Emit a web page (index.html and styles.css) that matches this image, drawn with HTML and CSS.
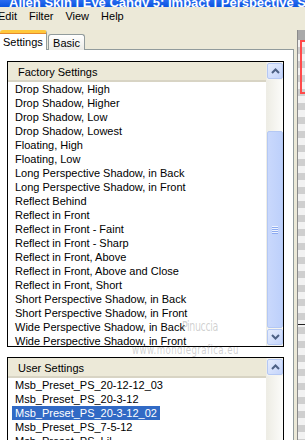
FILE: index.html
```html
<!DOCTYPE html>
<html>
<head>
<meta charset="utf-8">
<link rel="stylesheet" href="styles.css">
</head>
<body>
<div class="titlebar">
  <span class="title-icon"></span>
  <span class="title-text">Alien Skin | Eye Candy 5: Impact | Perspective Shadow</span>
</div>
<div class="menubar">
  <span class="menu first">Edit</span>
  <span class="menu">Filter</span>
  <span class="menu">View</span>
  <span class="menu">Help</span>
</div>
<div class="main">
  <div class="left">
    <div class="tabs">
      <div class="tab active">Settings</div>
      <div class="tab">Basic</div>
    </div>
    <div class="panel">
      <div class="listbox factory">
        <div class="listcol">
          <div class="lhead">Factory Settings</div>
          <div class="items">
            <div class="item"><span>Drop Shadow, High</span></div>
            <div class="item"><span>Drop Shadow, Higher</span></div>
            <div class="item"><span>Drop Shadow, Low</span></div>
            <div class="item"><span>Drop Shadow, Lowest</span></div>
            <div class="item"><span>Floating, High</span></div>
            <div class="item"><span>Floating, Low</span></div>
            <div class="item"><span>Long Perspective Shadow, in Back</span></div>
            <div class="item"><span>Long Perspective Shadow, in Front</span></div>
            <div class="item"><span>Reflect Behind</span></div>
            <div class="item"><span>Reflect in Front</span></div>
            <div class="item"><span>Reflect in Front - Faint</span></div>
            <div class="item"><span>Reflect in Front - Sharp</span></div>
            <div class="item"><span>Reflect in Front, Above</span></div>
            <div class="item"><span>Reflect in Front, Above and Close</span></div>
            <div class="item"><span>Reflect in Front, Short</span></div>
            <div class="item"><span>Short Perspective Shadow, in Back</span></div>
            <div class="item"><span>Short Perspective Shadow, in Front</span></div>
            <div class="item"><span>Wide Perspective Shadow, in Back</span></div>
            <div class="item"><span>Wide Perspective Shadow, in Front</span></div>
          </div>
        </div>
        <div class="scrollbar">
          <div class="sbtn"><svg width="9" height="6" viewBox="0 0 9 6"><path d="M1 5 L4.5 1.5 L8 5" fill="none" stroke="#4d6185" stroke-width="2"/></svg></div>
          <div class="track">
            <div class="thumb"><div class="grip"><i></i><i></i><i></i><i></i></div></div>
          </div>
          <div class="sbtn"><svg width="9" height="6" viewBox="0 0 9 6"><path d="M1 1 L4.5 4.5 L8 1" fill="none" stroke="#4d6185" stroke-width="2"/></svg></div>
        </div>
      </div>
      <div class="listbox user">
        <div class="listcol">
          <div class="lhead">User Settings</div>
          <div class="items">
            <div class="item"><span>Msb_Preset_PS_20-12-12_03</span></div>
            <div class="item"><span>Msb_Preset_PS_20-3-12</span></div>
            <div class="item sel"><span>Msb_Preset_PS_20-3-12_02</span></div>
            <div class="item"><span>Msb_Preset_PS_7-5-12</span></div>
            <div class="item"><span>Msb_Preset_PS_Lil</span></div>
          </div>
        </div>
        <div class="scrollbar">
          <div class="sbtn"><svg width="9" height="6" viewBox="0 0 9 6"><path d="M1 5 L4.5 1.5 L8 5" fill="none" stroke="#4d6185" stroke-width="2"/></svg></div>
          <div class="track"></div>
        </div>
      </div>
    </div>
  </div>
  <div class="right">
    <div class="preview">
      <div class="pv-top"></div>
      <div class="pv-canvas">
        <div class="redbox"></div>
        <div class="pv-line"></div>
      </div>
    </div>
  </div>
</div>
<div class="wm wm1">Pinuccia</div>
<div class="wm wm2">www.mondiegrafica.eu</div>
</body>
</html>
```
FILE: styles.css
```css
html, body {
  margin: 0;
  padding: 0;
}
body {
  width: 305px;
  height: 440px;
  overflow: hidden;
  background: #ece9d8;
  font-family: "Liberation Sans", Arial, sans-serif;
  font-size: 11px;
  color: #000;
  position: relative;
}
.titlebar {
  height: 7px;
  overflow: hidden;
  background: linear-gradient(#2a6cf0, #0a54e0);
  display: flex;
  align-items: flex-end;
  position: relative;
}
.title-icon {
  width: 6px;
  height: 5px;
  background: #1a2a4a;
  margin-left: 0;
  align-self: flex-start;
}
.title-text {
  color: #fff;
  font-weight: bold;
  font-size: 13px;
  line-height: 13px;
  white-space: nowrap;
  margin-left: 9px;
  margin-bottom: -2px;
}
.menubar {
  height: 17px;
  display: flex;
  align-items: center;
  padding-top: 1px;
  box-sizing: border-box;
}
.menu {
  padding: 0 6px;
}
.menu.first {
  margin-left: -8px;
}
.main {
  display: flex;
  height: 416px;
}
.left {
  width: 294px;
  display: flex;
  flex-direction: column;
  padding-top: 7px;
  box-sizing: border-box;
}
.tabs {
  display: flex;
  align-items: flex-end;
  height: 19px;
  position: relative;
  z-index: 1;
  margin-bottom: -1px;
}
.tab {
  height: 16px;
  width: 37px;
  box-sizing: border-box;
  border: 1px solid #919b9c;
  border-bottom: none;
  border-radius: 3px 3px 0 0;
  background: linear-gradient(#ffffff, #ecebe6);
  display: flex;
  align-items: center;
  justify-content: center;
  padding-top: 1px;
  margin-left: 1px;
}
.tab.active {
  height: 20px;
  width: 47px;
  margin-left: 0;
  background: #fff;
  border-top: 3px solid #ffc83c;
  border-left: none;
  border-radius: 3px 3px 0 0;
  justify-content: flex-start;
  padding-left: 3px;
  padding-top: 0;
  box-shadow: inset 0 1px 0 #e68b2c;
}
.panel {
  flex: 1;
  background: #fff;
  border-top: 1px solid #919b9c;
  border-right: 1px solid #919b9c;
  padding: 11px 9px 0 7px;
  display: flex;
  flex-direction: column;
  gap: 10px;
  overflow: hidden;
}
.listbox {
  border: 1px solid #000;
  display: flex;
  overflow: hidden;
  flex-shrink: 0;
}
.listbox.factory {
  height: 284px;
}
.listbox.user {
  height: 120px;
}
.listcol {
  flex: 1;
  display: flex;
  flex-direction: column;
  min-width: 0;
}
.lhead {
  height: 20px;
  box-sizing: border-box;
  background: #ece9d8;
  border-bottom: 2px solid #d8d4c4;
  padding-left: 10px;
  display: flex;
  align-items: center;
  padding-top: 1px;
  flex-shrink: 0;
}
.items {
  padding-left: 4px;
}
.item {
  height: 14px;
  line-height: 14px;
  white-space: nowrap;
}
.item span {
  display: inline-block;
  padding: 0 3px;
}
.item.sel span {
  background: #316ac5;
  color: #fff;
}
.scrollbar {
  width: 16px;
  display: flex;
  flex-direction: column;
  background: #f5f4ef;
  border-left: 1px solid #eeede6;
}
.sbtn {
  height: 16px;
  box-sizing: border-box;
  margin: 1px 0;
  border: 1px solid #b4c8f4;
  border-radius: 2px;
  background: linear-gradient(135deg, #e6edfd, #c4d4fb);
  display: flex;
  align-items: center;
  justify-content: center;
  flex-shrink: 0;
}
.track {
  flex: 1;
  display: flex;
  flex-direction: column;
  justify-content: flex-end;
  background: linear-gradient(90deg, #eeede5, #fcfcfa);
}
.thumb {
  height: 197px;
  box-sizing: border-box;
  border: 1px solid #b4c8f4;
  border-radius: 2px;
  background: linear-gradient(90deg, #c9d8fc, #bdd0fb);
  display: flex;
  align-items: center;
  justify-content: center;
}
.grip {
  display: flex;
  flex-direction: column;
  gap: 1px;
}
.grip i {
  display: block;
  width: 6px;
  height: 1px;
  background: #eef3fe;
  border-bottom: 1px solid #8caaf0;
}
.grip i + i {
  margin-top: -1px;
}
.right {
  flex: 1;
  padding: 6px 0 0 3px;
  box-sizing: border-box;
}
.preview {
  height: 100%;
  border-left: 1px solid #8a8a8a;
  display: flex;
  flex-direction: column;
}
.pv-top {
  height: 10px;
  background: #a9a9a9;
}
.pv-canvas {
  flex: 1;
  position: relative;
  background-color: #f2f2f2;
  background-image:
    linear-gradient(45deg, #cfcfcf 25%, transparent 25%, transparent 75%, #cfcfcf 75%),
    linear-gradient(45deg, #cfcfcf 25%, transparent 25%, transparent 75%, #cfcfcf 75%);
  background-size: 14px 14px;
  background-position: 0 0, 7px 7px;
}
.redbox {
  position: absolute;
  left: 2px;
  top: 0;
  width: 20px;
  height: 50px;
  border: 2px solid #ff4a4a;
}
.pv-line {
  position: absolute;
  left: 0;
  top: 284px;
  width: 10px;
  height: 1px;
  background: #222;
}
.wm {
  position: absolute;
  color: rgba(150, 150, 150, 0.45);
  font-family: "DejaVu Sans Condensed", "DejaVu Sans", sans-serif;
  white-space: nowrap;
  pointer-events: none;
}
.wm1 {
  left: 182px;
  top: 318px;
  font-size: 14px;
  letter-spacing: -0.5px;
  transform: scaleX(0.75);
  transform-origin: left top;
}
.wm2 {
  left: 132px;
  top: 343px;
  font-size: 12px;
  letter-spacing: 0.5px;
  transform: scaleX(0.8);
  transform-origin: left top;
}
```
